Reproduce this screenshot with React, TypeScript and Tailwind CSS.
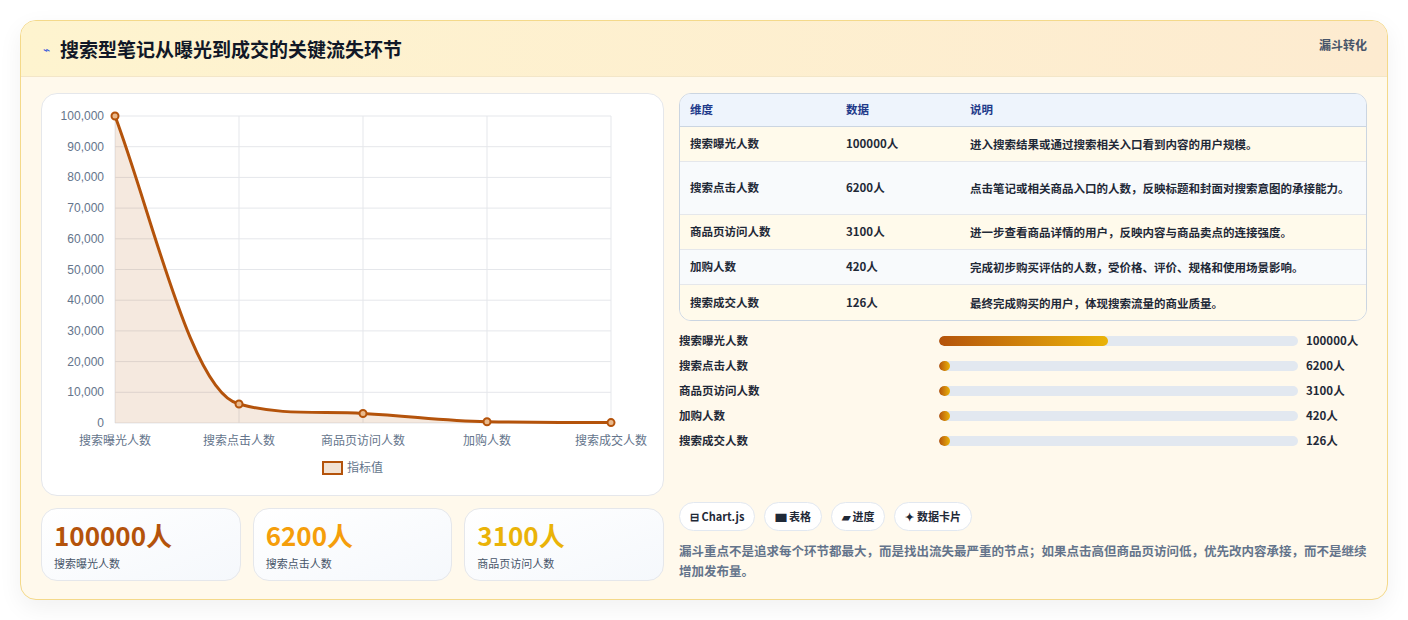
import React from 'react';

const rows = [
  { k: '搜索曝光人数', v: '100000人', d: '进入搜索结果或通过搜索相关入口看到内容的用户规模。' },
  { k: '搜索点击人数', v: '6200人', d: '点击笔记或相关商品入口的人数，反映标题和封面对搜索意图的承接能力。' },
  { k: '商品页访问人数', v: '3100人', d: '进一步查看商品详情的用户，反映内容与商品卖点的连接强度。' },
  { k: '加购人数', v: '420人', d: '完成初步购买评估的人数，受价格、评价、规格和使用场景影响。' },
  { k: '搜索成交人数', v: '126人', d: '最终完成购买的用户，体现搜索流量的商业质量。' },
];

const bars = [
  { k: '搜索曝光人数', v: '100000人', w: 47 },
  { k: '搜索点击人数', v: '6200人', w: 3 },
  { k: '商品页访问人数', v: '3100人', w: 3 },
  { k: '加购人数', v: '420人', w: 3 },
  { k: '搜索成交人数', v: '126人', w: 3 },
];

const yTicks = ['100,000', '90,000', '80,000', '70,000', '60,000', '50,000', '40,000', '30,000', '20,000', '10,000', '0'];
const xLabels = ['搜索曝光人数', '搜索点击人数', '商品页访问人数', '加购人数', '搜索成交人数'];
const pts: [number, number][] = [[73, 22], [197, 310], [321, 319.5], [445, 327.7], [569, 328.6]];

function Chart() {
  const line = 'M73,22 C110,120 150,300 197,310 C240,322 280,317 321,319.5 C370,322 400,327 445,327.7 C500,328.5 540,328.6 569,328.6';
  return (
    <svg width="622" height="400" className="block">
      {yTicks.map((t, i) => {
        const y = 22 + i * 30.7;
        return (
          <g key={t}>
            <line x1="73" x2="569" y1={y} y2={y} stroke="#e5e7eb" />
            <text x="62" y={y + 4} textAnchor="end" fontSize="12" fill="#64748b" fontFamily="Liberation Sans, sans-serif">{t}</text>
          </g>
        );
      })}
      {pts.map(([x], i) => (
        <g key={i}>
          <line x1={x} x2={x} y1="22" y2="329" stroke="#e5e7eb" />
          <text x={x} y="351" textAnchor="middle" fontSize="12" fill="#64748b" fontFamily="Noto Sans CJK SC, sans-serif">{xLabels[i]}</text>
        </g>
      ))}
      <path d={line + ' L569,329 L73,329 Z'} fill="rgba(180,83,9,0.13)" />
      <path d={line} fill="none" stroke="#b4530b" strokeWidth="3" />
      {pts.map(([x, y], i) => (
        <circle key={i} cx={x} cy={y} r="3.5" fill="#e9b98c" stroke="#b4530b" strokeWidth="2" />
      ))}
      <rect x="281" y="368" width="19" height="12" fill="#f2e2d3" stroke="#b4530b" strokeWidth="2" />
      <text x="305" y="378" fontSize="12" fill="#64748b" fontFamily="Noto Sans CJK SC, sans-serif">指标值</text>
    </svg>
  );
}

export default function App() {
  return (
    <div className="w-[1408px] h-[620px] bg-white pt-5 px-5" style={{ fontFamily: '"Noto Sans CJK SC", "Liberation Sans", sans-serif' }}>
      <div className="rounded-2xl border border-[#f4d98a] bg-[#fff9ec] overflow-hidden h-[580px] shadow-[0_8px_24px_rgba(0,0,0,0.06)]">
        <div className="h-[56px] px-5 flex items-start justify-between bg-gradient-to-r from-[#fef4cf] to-[#fdebd0] border-b border-[#f3e6c8]">
          <div className="flex items-center gap-[10px] mt-[14px] ml-[2px]">
            <span className="text-[12px] text-[#3b5bdb]">⌁</span>
            <span className="text-[19px] font-bold text-[#111827]">搜索型笔记从曝光到成交的关键流失环节</span>
          </div>
          <span className="mt-[15px] text-[12px] font-bold text-[#475569]">漏斗转化</span>
        </div>
        <div className="flex gap-[15px] px-5 pt-4">
          <div className="w-[623px] flex flex-col gap-3">
            <div className="h-[403px] rounded-2xl border border-[#e5e7eb] bg-white">
              <Chart />
            </div>
            <div className="grid grid-cols-3 gap-3">
              {[['100000人', 'text-[#b4530b]', '搜索曝光人数'], ['6200人', 'text-[#f59e0b]', '搜索点击人数'], ['3100人', 'text-[#eab308]', '商品页访问人数']].map(([v, c, l]) => (
                <div key={l} className="h-[73px] rounded-2xl border border-[#e5e7eb] bg-gradient-to-br from-white to-[#f5f8fc] px-3 pt-2">
                  <div className={`text-[26px] font-bold leading-[36px] ${c}`}>{v}</div>
                  <div className="text-[11px] text-[#475569] mt-0.5">{l}</div>
                </div>
              ))}
            </div>
          </div>
          <div className="flex-1 flex flex-col">
            <div className="rounded-xl border border-[#cbd5e1] overflow-hidden bg-white">
              <div className="flex h-[33px] items-center bg-[#eef4fc] border-b border-[#cbd5e1] text-[11.5px] font-bold text-[#1e3a8a]">
                <div className="w-[166px] pl-[10px]">维度</div>
                <div className="w-[124px]">数据</div>
                <div className="flex-1">说明</div>
              </div>
              {rows.map((r, i) => (
                <div key={r.k} className={`flex items-center text-[11.5px] font-semibold text-[#1f2937] border-b border-[#e5e7eb] last:border-b-0 ${i % 2 === 0 ? 'bg-[#fffaeb]' : 'bg-[#f8fafc]'} ${i === 1 ? 'h-[53px]' : 'h-[35px]'}`}>
                  <div className="w-[166px] pl-[10px]">{r.k}</div>
                  <div className="w-[124px]">{r.v}</div>
                  <div className="flex-1 pr-[14px] leading-[18px]">{r.d}</div>
                </div>
              ))}
            </div>
            <div className="mt-[10px] flex flex-col gap-[6px]">
              {bars.map(b => (
                <div key={b.k} className="flex items-center h-[19px] text-[11.5px] font-semibold text-[#1f2937]">
                  <div className="w-[260px]">{b.k}</div>
                  <div className="w-[359px] h-[10px] rounded-full bg-[#e2e8f0] overflow-hidden">
                    <div className="h-full rounded-full bg-gradient-to-r from-[#b4530b] to-[#eab308]" style={{ width: `${b.w}%` }} />
                  </div>
                  <div className="ml-2">{b.v}</div>
                </div>
              ))}
            </div>
            <div className="mt-[52px] flex gap-[9px]">
              {['⊟ Chart.js', '▆ 表格', '▰ 进度', '✦ 数据卡片'].map(t => (
                <span key={t} className="h-[29px] px-[10px] flex items-center rounded-full border border-[#e2e8f0] bg-white text-[11px] font-bold text-[#1f2937]">{t}</span>
              ))}
            </div>
            <p className="mt-[10px] text-[12.5px] leading-[20px] font-bold text-[#64748b]">漏斗重点不是追求每个环节都最大，而是找出流失最严重的节点；如果点击高但商品页访问低，优先改内容承接，而不是继续增加发布量。</p>
          </div>
        </div>
      </div>
    </div>
  );
}
